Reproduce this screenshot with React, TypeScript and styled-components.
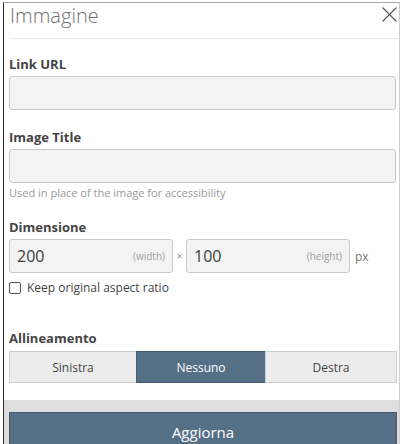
import React from "react";
import styled, { createGlobalStyle } from "styled-components";

const GlobalStyle = createGlobalStyle`
    html, body {
        margin: 0;
        padding: 0;
        background: #ffffff;
        overflow: hidden;
    }
    body {
        font-family: "Open Sans", "Noto Sans", Arial, sans-serif;
    }
    * {
        box-sizing: border-box;
    }
`;

const Modal = styled.div`
    margin: 2px 0 0 3px;
    width: 397px;
    height: 442px;
    display: flex;
    flex-direction: column;
    background: #ffffff;
    border-top: 1px solid #a8a8a8;
    border-left: 1px solid #2a2a2a;
    border-right: 1px solid #cfcfcf;
    overflow: hidden;
`;

const Header = styled.div`
    display: flex;
    align-items: flex-start;
    justify-content: space-between;
    margin: 0 1px 0 6px;
    padding-bottom: 9px;
    border-bottom: 1px solid #e6e6e6;
`;

const Title = styled.h2`
    margin: 0;
    font-family: "Open Sans Light", "Open Sans", "Noto Sans", sans-serif;
    font-size: 20px;
    line-height: 26px;
    font-weight: 300;
    color: #707070;
`;

const CloseButton = styled.button`
    border: none;
    background: none;
    padding: 0;
    margin: 4px 0 0 0;
    width: 16px;
    height: 16px;
    cursor: pointer;
    display: flex;
`;

const Body = styled.div`
    padding: 16px 3px 17px 5px;
`;

const Group = styled.div<{ $gap?: number }>`
    margin-top: ${(p) => p.$gap ?? 0}px;
`;

const Label = styled.label<{ $mb?: number }>`
    display: block;
    font-size: 13px;
    line-height: 18px;
    font-weight: 700;
    color: #444444;
    margin-bottom: ${(p) => p.$mb ?? 3}px;
`;

const TextInput = styled.input`
    display: block;
    width: 100%;
    height: 34px;
    background: #f3f3f3;
    border: 1px solid #c9c9c9;
    border-radius: 3px;
    font-family: inherit;
    font-size: 14px;
    padding: 0 8px;
    outline: none;
`;

const Help = styled.div`
    margin-top: 2px;
    font-size: 11px;
    line-height: 16px;
    color: #9a9a9a;
`;

const DimRow = styled.div`
    display: flex;
    align-items: center;
`;

const DimBox = styled.div`
    width: 164px;
    height: 34px;
    display: flex;
    align-items: center;
    justify-content: space-between;
    padding: 0 7px;
    background: #f3f3f3;
    border: 1px solid #c9c9c9;
    border-radius: 3px;
`;

const DimValue = styled.span`
    font-size: 16px;
    color: #3c3c3c;
`;

const DimHint = styled.span`
    font-size: 10px;
    color: #a0a0a0;
`;

const Times = styled.span`
    width: 13px;
    text-align: center;
    font-size: 10px;
    color: #8a8a8a;
`;

const Unit = styled.span`
    margin-left: 5px;
    font-size: 12px;
    color: #777777;
`;

const CheckRow = styled.label`
    display: flex;
    align-items: center;
    gap: 6px;
    margin-top: 6px;
    font-size: 12px;
    line-height: 18px;
    color: #444444;
`;

const CheckBox = styled.span`
    width: 12px;
    height: 12px;
    border: 1px solid #555555;
    border-radius: 2px;
    background: #ffffff;
`;

const Segmented = styled.div`
    display: grid;
    grid-template-columns: 128px 129px 1fr;
    margin-right: -1px;
`;

const SegButton = styled.button<{ $active?: boolean }>`
    height: 32px;
    font-family: inherit;
    font-size: 12px;
    color: ${(p) => (p.$active ? "#ffffff" : "#444444")};
    background: ${(p) => (p.$active ? "#556f87" : "#ececec")};
    border: 1px solid ${(p) => (p.$active ? "#465d72" : "#cdcdcd")};
    margin-left: -1px;
    padding: 0;
    cursor: pointer;
    &:first-child {
        margin-left: 0;
    }
`;

const Footer = styled.div`
    flex: 1;
    background: #dedede;
    padding: 12px 2px 0 5px;
    display: flex;
`;

const PrimaryButton = styled.button`
    flex: 1;
    height: 44px;
    background: #556f87;
    border: 1px solid #47596b;
    color: #ffffff;
    font-family: inherit;
    font-size: 15px;
    padding: 0 0 4px;
    cursor: pointer;
`;

export default function App() {
    return (
        <>
            <GlobalStyle />
            <Modal>
                <Header>
                    <Title>Immagine</Title>
                    <CloseButton aria-label="Chiudi">
                        <svg width="15" height="15" viewBox="0 0 15 15">
                            <path d="M0.5 0.5 L14.5 14.5 M14.5 0.5 L0.5 14.5" stroke="#555" strokeWidth="1.1" fill="none" />
                        </svg>
                    </CloseButton>
                </Header>
                <Body>
                    <Group>
                        <Label>Link URL</Label>
                        <TextInput />
                    </Group>
                    <Group $gap={18}>
                        <Label>Image Title</Label>
                        <TextInput />
                        <Help>Used in place of the image for accessibility</Help>
                    </Group>
                    <Group $gap={17}>
                        <Label>Dimensione</Label>
                        <DimRow>
                            <DimBox>
                                <DimValue>200</DimValue>
                                <DimHint>(width)</DimHint>
                            </DimBox>
                            <Times>×</Times>
                            <DimBox>
                                <DimValue>100</DimValue>
                                <DimHint>(height)</DimHint>
                            </DimBox>
                            <Unit>px</Unit>
                        </DimRow>
                        <CheckRow>
                            <CheckBox />
                            Keep original aspect ratio
                        </CheckRow>
                    </Group>
                    <Group $gap={32}>
                        <Label $mb={4}>Allineamento</Label>
                        <Segmented>
                            <SegButton>Sinistra</SegButton>
                            <SegButton $active>Nessuno</SegButton>
                            <SegButton>Destra</SegButton>
                        </Segmented>
                    </Group>
                </Body>
                <Footer>
                    <PrimaryButton>Aggiorna</PrimaryButton>
                </Footer>
            </Modal>
        </>
    );
}
